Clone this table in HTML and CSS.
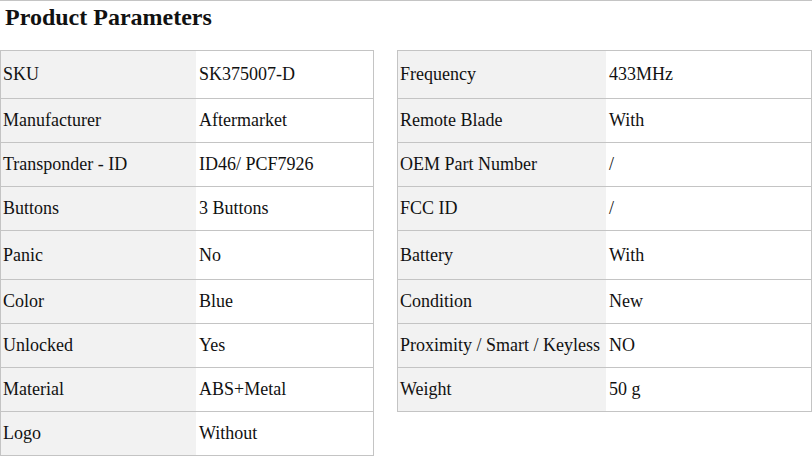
FILE: index.html
```html
<!DOCTYPE html>
<html>
<head>
<meta charset="utf-8">
<link rel="stylesheet" href="styles.css">
</head>
<body>
<div class="page">
  <h2 class="title">Product Parameters</h2>
  <div class="tables">
    <div class="spec spec-left">
      <div class="cell label r48">SKU</div><div class="cell value r48">SK375007-D</div>
      <div class="cell label">Manufacturer</div><div class="cell value">Aftermarket</div>
      <div class="cell label">Transponder - ID</div><div class="cell value">ID46/ PCF7926</div>
      <div class="cell label">Buttons</div><div class="cell value">3 Buttons</div>
      <div class="cell label r49">Panic</div><div class="cell value r49">No</div>
      <div class="cell label">Color</div><div class="cell value">Blue</div>
      <div class="cell label">Unlocked</div><div class="cell value">Yes</div>
      <div class="cell label">Material</div><div class="cell value">ABS+Metal</div>
      <div class="cell label">Logo</div><div class="cell value">Without</div>
    </div>
    <div class="spec spec-right">
      <div class="cell label r48">Frequency</div><div class="cell value r48">433MHz</div>
      <div class="cell label">Remote Blade</div><div class="cell value">With</div>
      <div class="cell label">OEM Part Number</div><div class="cell value">/</div>
      <div class="cell label">FCC ID</div><div class="cell value">/</div>
      <div class="cell label r49">Battery</div><div class="cell value r49">With</div>
      <div class="cell label">Condition</div><div class="cell value">New</div>
      <div class="cell label">Proximity / Smart / Keyless</div><div class="cell value">NO</div>
      <div class="cell label">Weight</div><div class="cell value">50 g</div>
    </div>
  </div>
</div>
</body>
</html>
```
FILE: styles.css
```css
html, body {
  margin: 0;
  padding: 0;
  background: #fff;
}
body {
  font-family: "Liberation Serif", "Times New Roman", serif;
  color: #111;
  font-size: 18px;
}
.page {
  width: 812px;
  border-top: 1px solid #c4c4c4;
}
.title {
  margin: 0;
  padding: 2px 0 0 5px;
  height: 44px;
  box-sizing: border-box;
  font-size: 24px;
  font-weight: bold;
  line-height: 28px;
}
.tables {
  display: flex;
  align-items: flex-start;
  gap: 23px;
  margin-top: 5px;
}
.spec {
  display: grid;
  border: 1px solid #c4c4c4;
  border-bottom: none;
}
.spec-left {
  grid-template-columns: 195px 177px;
}
.spec-right {
  grid-template-columns: 208px 205px;
}
.cell {
  box-sizing: border-box;
  height: 44px;
  border-bottom: 1px solid #c4c4c4;
  display: flex;
  align-items: center;
  padding-left: 3px;
  white-space: nowrap;
}
.cell.r48 { height: 48px; }
.cell.r49 { height: 49px; }
.label {
  background: #f2f2f2;
  padding-left: 2px;
}
.value {
  background: #fff;
}
```
